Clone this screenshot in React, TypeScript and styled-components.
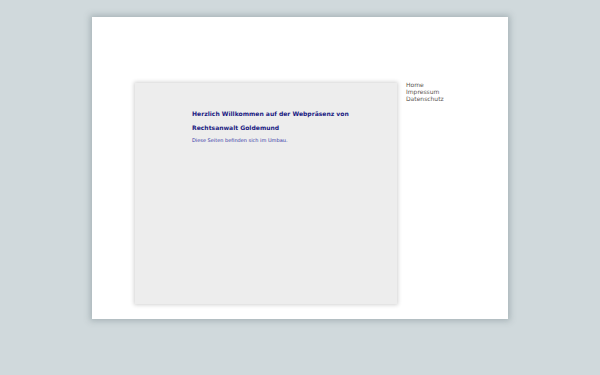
import React from 'react';
import styled, { createGlobalStyle } from 'styled-components';

const GlobalStyle = createGlobalStyle`
  html, body {
    margin: 0;
    padding: 0;
    background: #d0d9dc;
    font-family: "DejaVu Sans", Verdana, sans-serif;
  }
`;

const navItems = ['Home', 'Impressum', 'Datenschutz'];

function App() {
  return (
    <>
      <GlobalStyle />
      <Page>
        <Wrapper>
          <Content>
            <Heading>Herzlich Willkommen auf der Webpräsenz von</Heading>
            <Heading>Rechtsanwalt Goldemund</Heading>
            <Note>Diese Seiten befinden sich im Umbau.</Note>
          </Content>
          <Nav>
            {navItems.map((item) => (
              <NavLink key={item} href="#">
                {item}
              </NavLink>
            ))}
          </Nav>
        </Wrapper>
      </Page>
    </>
  );
}

const Page = styled.div`
  display: flex;
  justify-content: center;
  padding-top: 17px;
  height: 375px;
  box-sizing: border-box;
`;

const Wrapper = styled.div`
  display: flex;
  align-items: flex-start;
  gap: 9px;
  width: 416px;
  height: 302px;
  box-sizing: border-box;
  padding: 66px 0 15px 43px;
  background: #fff;
  box-shadow: 0 0 6px 2px rgba(120, 135, 140, 0.45);
`;

const Content = styled.div`
  width: 262px;
  height: 221px;
  box-sizing: border-box;
  padding: 27px 0 0 57px;
  background: #ededed;
  box-shadow: 0 0 4px 1px rgba(0, 0, 0, 0.18);
`;

const Heading = styled.h1`
  margin: 0 0 6px;
  font-size: 6.05px;
  line-height: 8px;
  font-weight: bold;
  color: #1a1a82;
  white-space: nowrap;
`;

const Note = styled.p`
  margin: -1px 0 0;
  font-size: 5px;
  line-height: 6px;
  color: #3535a5;
`;

const Nav = styled.nav`
  display: flex;
  flex-direction: column;
  margin-top: -2px;
`;

const NavLink = styled.a`
  font-size: 6px;
  line-height: 7px;
  color: #5a5550;
  text-decoration: none;
`;

export default App;
